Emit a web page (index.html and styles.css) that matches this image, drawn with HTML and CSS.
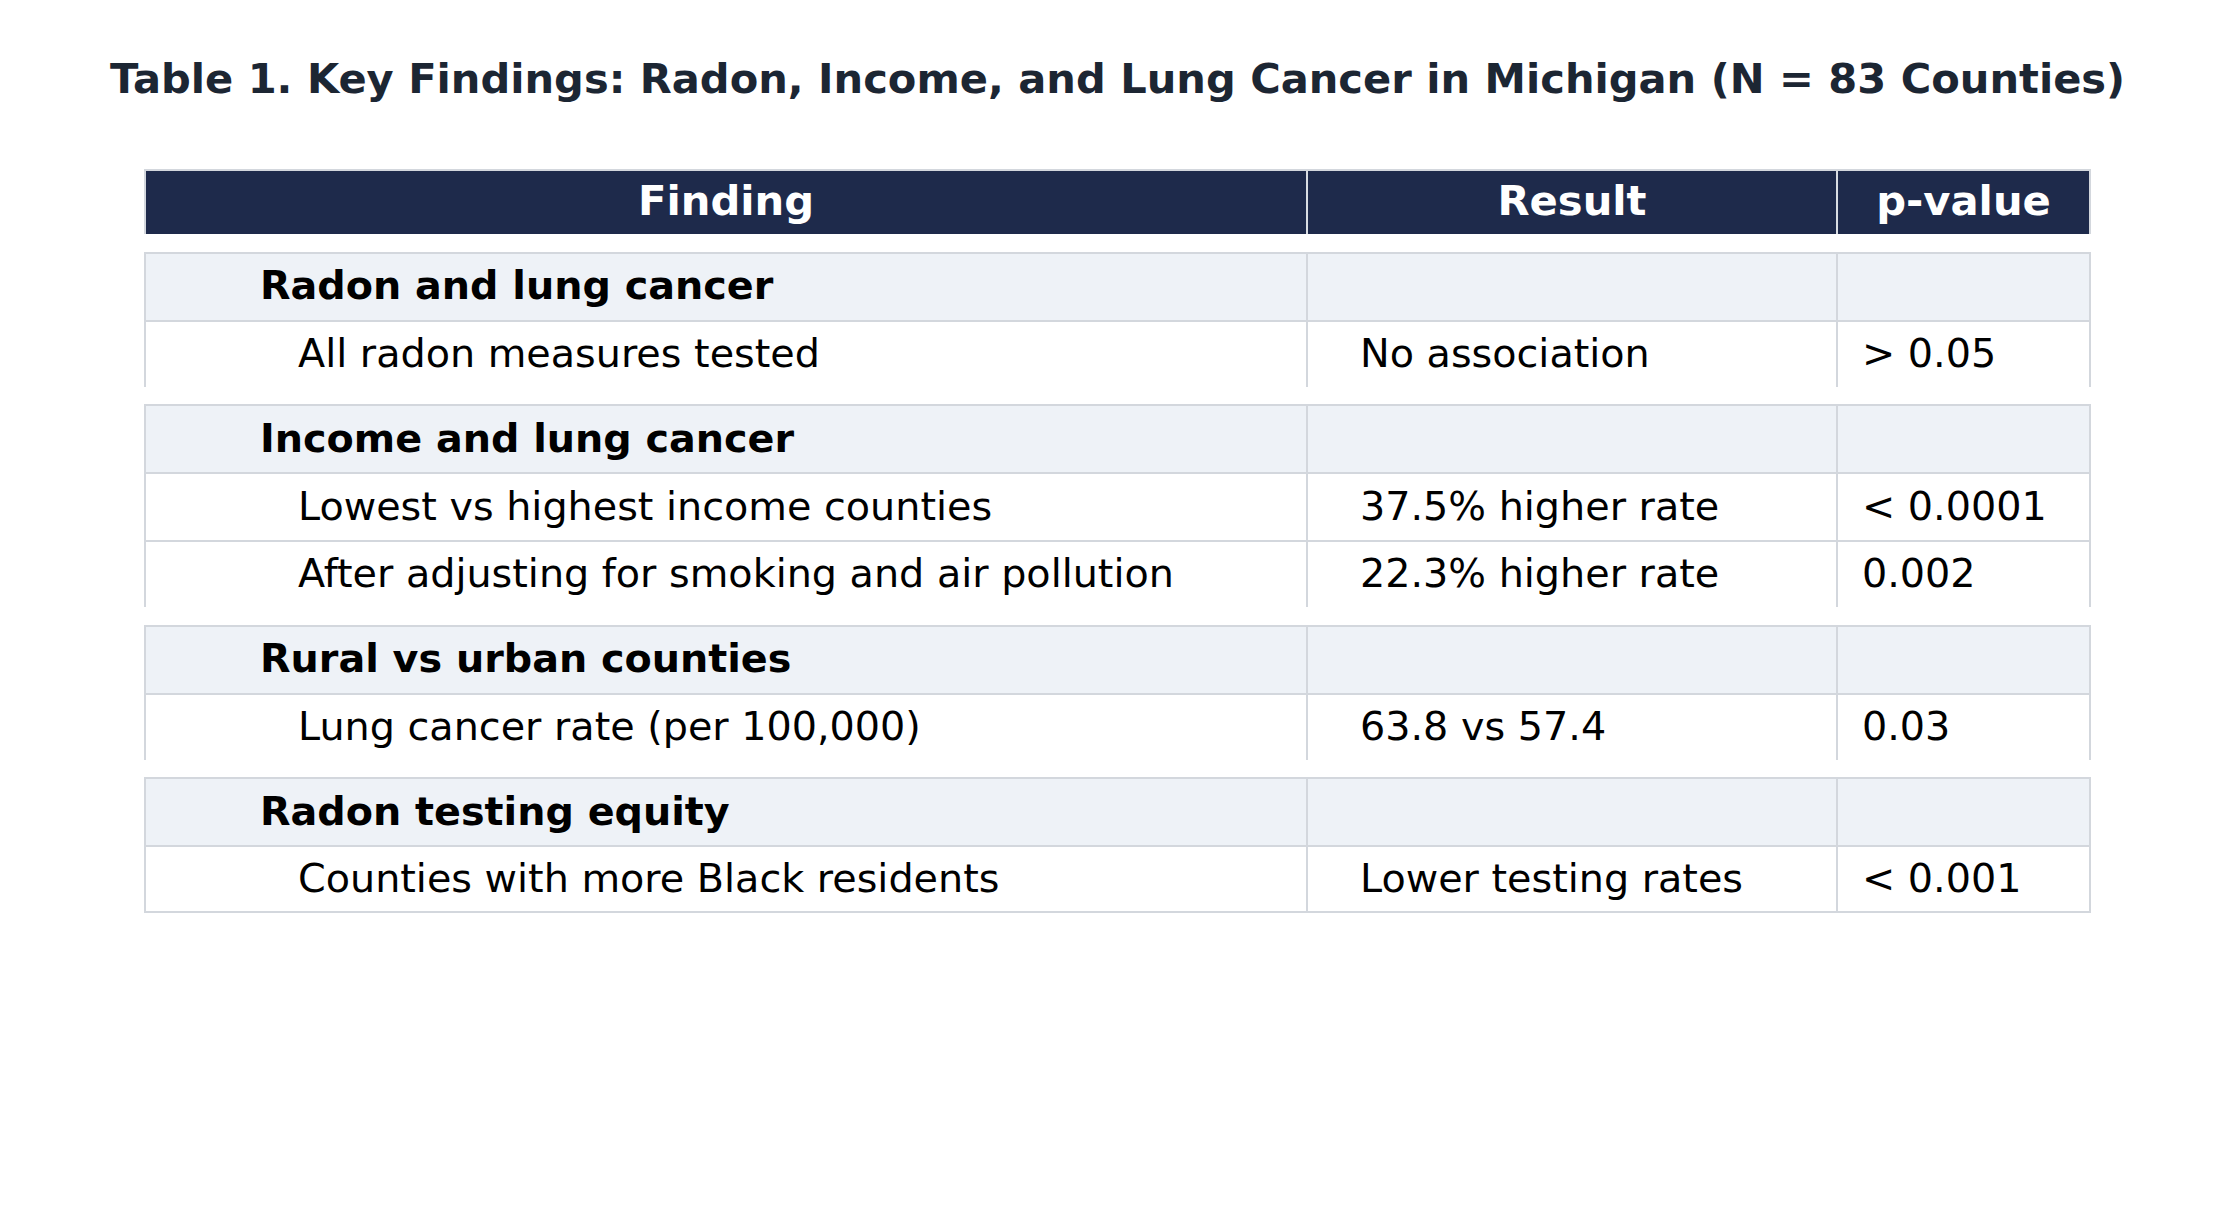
FILE: index.html
```html
<!DOCTYPE html>
<html lang="en">
<head>
<meta charset="utf-8">
<title>Key Findings</title>
<link rel="stylesheet" href="styles.css">
</head>
<body>
<div class="page">
  <h1 class="title">Table 1. Key Findings: Radon, Income, and Lung Cancer in Michigan (N = 83 Counties)</h1>
  <div class="table">
    <div class="row head">
      <div class="cell c1">Finding</div>
      <div class="cell c2">Result</div>
      <div class="cell c3">p-value</div>
    </div>

    <div class="group">
      <div class="row sub">
        <div class="cell c1">Radon and lung cancer</div>
        <div class="cell c2"></div>
        <div class="cell c3"></div>
      </div>
      <div class="row data">
        <div class="cell c1">All radon measures tested</div>
        <div class="cell c2">No association</div>
        <div class="cell c3">&gt; 0.05</div>
      </div>
    </div>

    <div class="group">
      <div class="row sub">
        <div class="cell c1">Income and lung cancer</div>
        <div class="cell c2"></div>
        <div class="cell c3"></div>
      </div>
      <div class="row data">
        <div class="cell c1">Lowest vs highest income counties</div>
        <div class="cell c2">37.5% higher rate</div>
        <div class="cell c3">&lt; 0.0001</div>
      </div>
      <div class="row data">
        <div class="cell c1">After adjusting for smoking and air pollution</div>
        <div class="cell c2">22.3% higher rate</div>
        <div class="cell c3">0.002</div>
      </div>
    </div>

    <div class="group">
      <div class="row sub">
        <div class="cell c1">Rural vs urban counties</div>
        <div class="cell c2"></div>
        <div class="cell c3"></div>
      </div>
      <div class="row data">
        <div class="cell c1">Lung cancer rate (per 100,000)</div>
        <div class="cell c2">63.8 vs 57.4</div>
        <div class="cell c3">0.03</div>
      </div>
    </div>

    <div class="group last">
      <div class="row sub">
        <div class="cell c1">Radon testing equity</div>
        <div class="cell c2"></div>
        <div class="cell c3"></div>
      </div>
      <div class="row data">
        <div class="cell c1">Counties with more Black residents</div>
        <div class="cell c2">Lower testing rates</div>
        <div class="cell c3">&lt; 0.001</div>
      </div>
    </div>
  </div>
</div>
</body>
</html>
```

FILE: styles.css
```css
* { box-sizing: border-box; }
html, body { margin: 0; padding: 0; background: #ffffff; }
body { font-family: "DejaVu Sans", "Liberation Sans", sans-serif; color: #000; }

.page { padding-top: 55px; }

.title {
  margin: 0;
  text-align: center;
  font-size: 41.6px;
  line-height: 48px;
  font-weight: bold;
  color: #1c2633;
}

.table {
  width: 1947px;
  margin: 66px 0 0 144px;
}

.row {
  display: grid;
  grid-template-columns: 1160px 530px 253px;
  height: 68px;
}

.cell {
  display: flex;
  align-items: center;
  font-size: 39.7px;
  white-space: nowrap;
  padding-bottom: 3px;
}
.cell.c2, .cell.c3 { border-left: 2px solid #d3d7dd; }

.row.head {
  height: 65px;
  background: #1e2a4b;
  border: 2px solid #d3d7dd;
  border-bottom: none;
}
.row.head .cell {
  justify-content: center;
  color: #ffffff;
  font-weight: bold;
  font-size: 41.7px;
  padding-bottom: 4px;
}
.row.head .cell.c2, .row.head .cell.c3 { border-left-color: #d9dde3; }

.group {
  margin-top: 17.5px;
  border: 2px solid #d3d7dd;
  border-bottom: none;
}
.group.last { border-bottom: 2px solid #d3d7dd; }

.group .row + .row { border-top: 2px solid #d3d7dd; }
.group .row:first-child { height: 66px; }
.group .row:last-child { height: 67px; }
.group.last .row:last-child { height: 66px; }

.row.sub { background: #eef2f7; }
.row.sub .cell.c1 { font-weight: bold; padding-left: 114px; }
.row.data .cell.c1 { padding-left: 152px; }
.row.data .cell.c2 { padding-left: 52px; }
.row.data .cell.c3 { padding-left: 24px; }
```
